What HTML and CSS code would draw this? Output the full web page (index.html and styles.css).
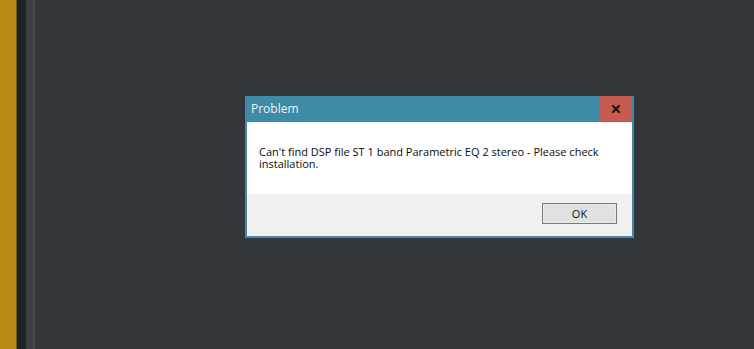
FILE: index.html
```html
<!DOCTYPE html>
<html>
<head>
<meta charset="utf-8">
<link rel="stylesheet" href="styles.css">
</head>
<body>
<div class="app">
  <div class="rail-yellow"></div>
  <div class="rail-dark"></div>
  <div class="rail-gray"></div>
  <div class="rail-line"></div>
  <div class="canvas">
    <div class="dialog">
      <div class="titlebar">
        <span class="title">Problem</span>
        <div class="close">
          <svg width="8" height="8" viewBox="0 0 8 8"><path d="M1 1 L7 7 M7 1 L1 7" stroke="#151515" stroke-width="2.1" stroke-linecap="square"/></svg>
        </div>
      </div>
      <div class="body">
        <p class="msg">Can't find DSP file ST 1 band Parametric EQ 2 stereo - Please check installation.</p>
      </div>
      <div class="footer">
        <button class="ok">OK</button>
      </div>
    </div>
  </div>
</div>
</body>
</html>
```
FILE: styles.css
```css
* { box-sizing: border-box; }
html, body { margin: 0; padding: 0; }
body {
  width: 754px;
  height: 349px;
  overflow: hidden;
  background: #33373a;
  font-family: "Open Sans", "Noto Sans", sans-serif;
}
.app {
  display: flex;
  height: 349px;
}
.rail-yellow { width: 17px; background: #b98a14; border-right: 1px solid #6e5a1a; }
.rail-dark { width: 9px; background: #1f2326; }
.rail-gray { width: 7px; background: #3c4043; }
.rail-line { width: 2px; background: #474b4e; }
.canvas {
  flex: 1;
  background: #33373a;
  padding-top: 96px;
  padding-left: 210px;
}
.dialog {
  width: 389px;
  height: 142px;
  border: 2px solid #4688a6;
  border-top: 0;
  background: #ffffff;
  display: flex;
  flex-direction: column;
}
.titlebar {
  height: 26px;
  margin: 0 -2px;
  padding: 0 2px;
  background: #3f8aa7;
  display: flex;
  align-items: stretch;
  justify-content: space-between;
}
.title {
  color: #eef5f8;
  font-size: 12px;
  padding-left: 4px;
  padding-top: 1px;
  line-height: 24px;
}
.close {
  width: 33px;
  height: 25px;
  background: #c75a4e;
  display: flex;
  align-items: center;
  justify-content: center;
}
.body {
  height: 72px;
  background: #ffffff;
  padding: 23px 0 0 12px;
  border-top: 1px solid #eaf2f5;
}
.msg {
  margin: 0;
  font-size: 11px;
  line-height: 12px;
  color: #0c0c0c;
  width: 350px;
}
.footer {
  flex: 1;
  background: #f0f0f0;
  display: flex;
  justify-content: flex-end;
  align-items: flex-start;
  padding: 9px 15px 0 0;
}
.ok {
  width: 75px;
  height: 21px;
  border: 1px solid #7a7a7a;
  box-shadow: inset 0 0 0 1px #e9e9e9;
  background: #e1e1e1;
  font-family: "Open Sans", "Noto Sans", sans-serif;
  font-size: 11px;
  color: #111;
  padding: 0;
}
```
